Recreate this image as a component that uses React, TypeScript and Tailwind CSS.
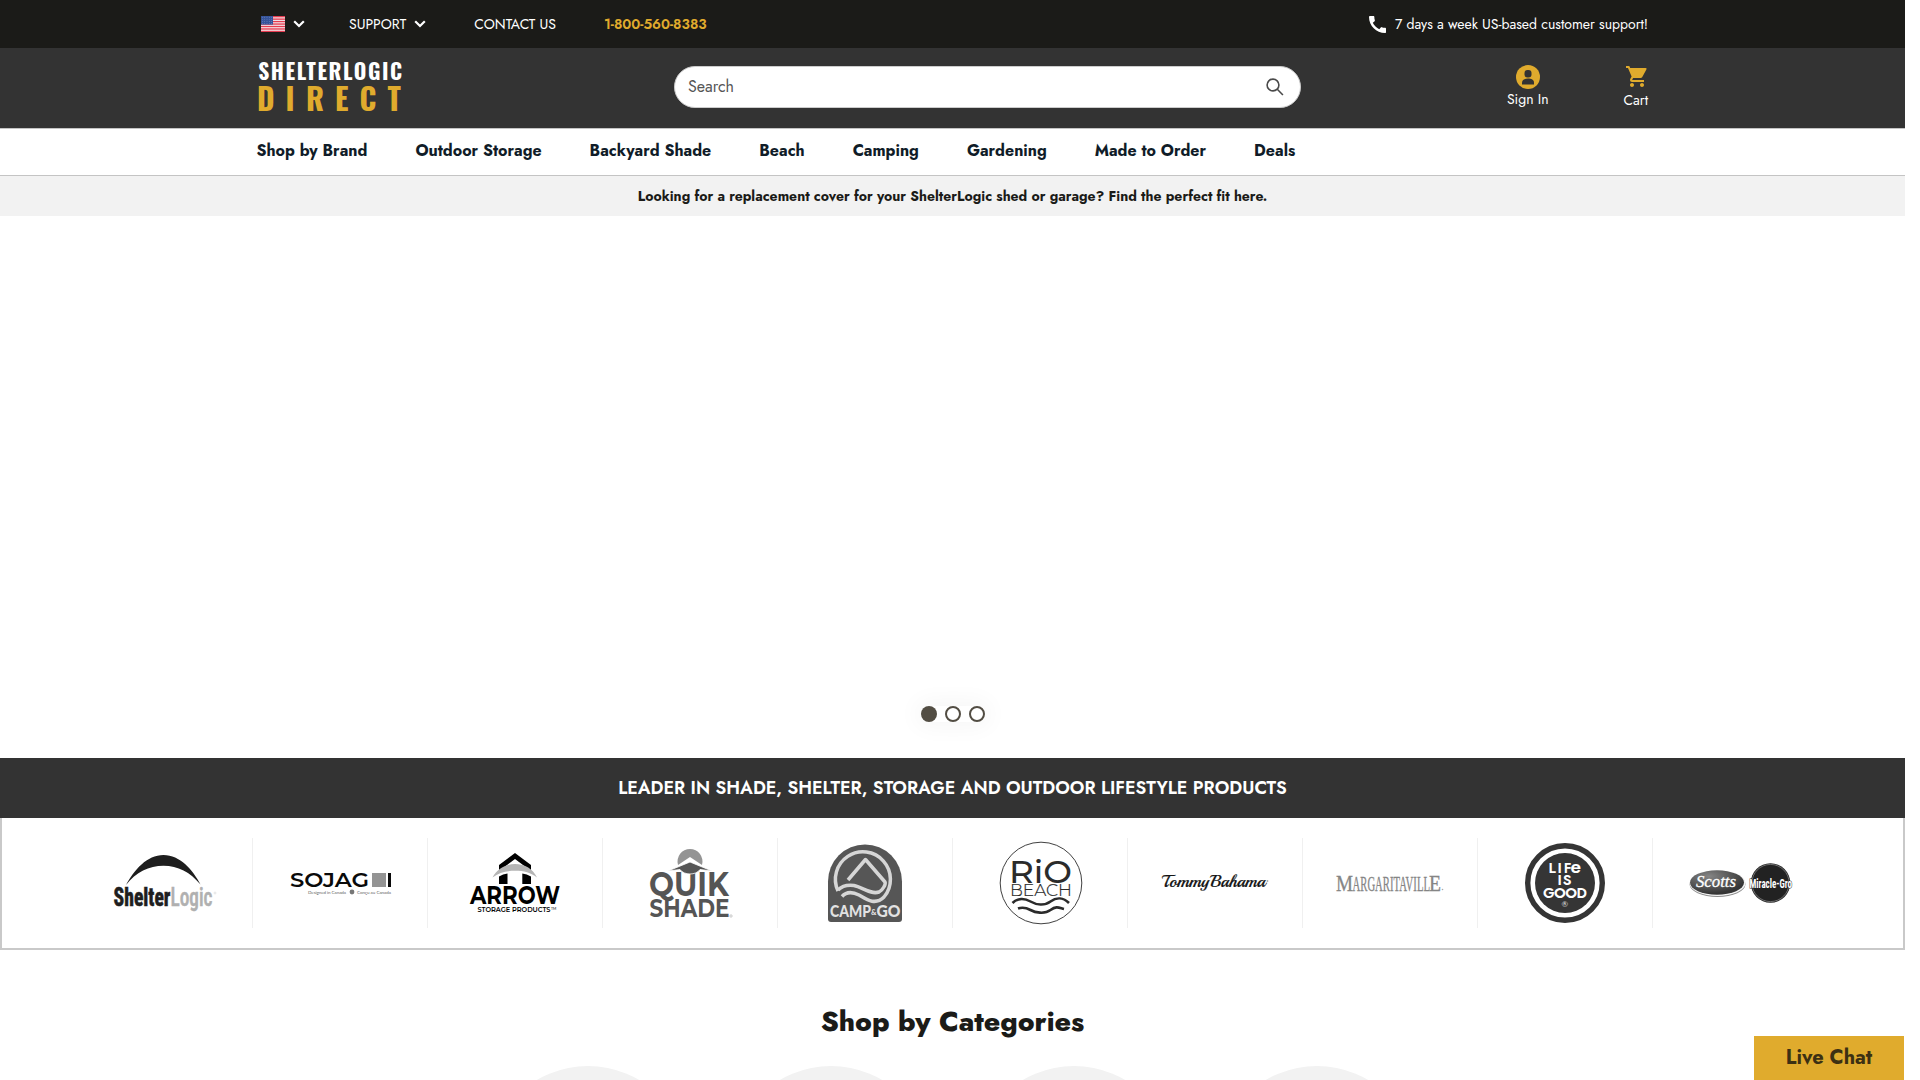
import type { ReactNode } from 'react';

const NAV = ['Shop by Brand', 'Outdoor Storage', 'Backyard Shade', 'Beach', 'Camping', 'Gardening', 'Made to Order', 'Deals'];

function Chevron() {
  return (
    <svg width="12" height="8" viewBox="0 0 12 8" fill="none" stroke="#fff" strokeWidth="2.2">
      <path d="M1.2 1.2 6 6l4.800-4.800" />
    </svg>
  );
}

function Flag() {
  return (
    <svg width="24" height="16" viewBox="0 0 24 16">
      <rect width="24" height="16" fill="#f4eef0" />
      {[0, 1, 2, 3, 4, 5, 6].map((i) => (
        <rect key={i} y={i * 2.46} width="24" height="1.35" fill="#e63c50" />
      ))}
      <rect width="12" height="8.600" fill="#36549a" />
      {[0, 1, 2, 3].map((r) =>
        [0, 1, 2, 3, 4].map((c) => (
          <circle key={`${r}-${c}`} cx={1.4 + c * 2.3} cy={1.2 + r * 2.05} r="0.35" fill="#a9b8dc" />
        )),
      )}
    </svg>
  );
}

function TopBar() {
  return (
    <div className="h-12 bg-[#1b1b18] pr-[257px] pl-[261px] flex items-center justify-between text-[14px] text-white">
      <div className="flex items-center">
        <Flag />
        <span className="ml-2 mr-[44px]"><Chevron /></span>
        <span>SUPPORT</span>
        <span className="ml-2 mr-[48px]"><Chevron /></span>
        <span className="mr-[48px]">CONTACT US</span>
        <span className="font-semibold text-[#e0ab2d]">1-800-560-8383</span>
      </div>
      <div className="flex items-center gap-[9px]">
        <svg width="17" height="17" viewBox="3 3 18 18" fill="#fff">
          <path d="M20.010 15.380c-1.230 0-2.420-.200-3.530-.560a.977.977 0 0 0-1.010.240l-1.570 1.970c-2.830-1.350-5.480-3.900-6.890-6.830l1.950-1.660c.270-.280.350-.670.240-1.020-.370-1.110-.560-2.300-.560-3.530 0-.540-.450-.990-.990-.990H4.190C3.650 3 3 3.240 3 3.990 3 13.280 10.730 21 20.010 21c.710 0 .990-.630.990-1.180v-3.450c0-.540-.450-.990-.990-.990z" />
        </svg>
        <span>7 days a week US-based customer support!</span>
      </div>
    </div>
  );
}

function SiteLogo() {
  return (
    <svg width="148" height="60" viewBox="0 0 148 60" className="overflow-visible font-['Oswald','Roboto_Condensed',sans-serif]">
      <text x="1.200" y="24" fontSize="21.500" fontWeight="700" fill="#fff" textLength="144" lengthAdjust="spacing">SHELTERLOGIC</text>
      <g fontSize="30" fill="#e0ab2d" fontWeight="700">
        <text x="0" y="55">D</text>
        <text x="28.500" y="55">I</text>
        <text x="49" y="55">R</text>
        <text x="78" y="55">E</text>
        <text x="102.500" y="55">C</text>
        <text x="130.500" y="55">T</text>
      </g>
    </svg>
  );
}

function Header() {
  return (
    <div className="h-[81px] border-b border-[#c4c4c4] bg-[#333] pr-[257px] pl-[257px] flex items-start justify-between">
      <div className="mt-2 w-[417px]"><SiteLogo /></div>
      <div className="mt-[18px] h-[42px] w-[627px] rounded-[21px] border border-[#ccc] bg-white pl-[13px] pr-[16px] flex items-center justify-between text-[16px] text-[#555]">
        <span>Search</span>
        <svg width="18" height="18" viewBox="0 0 18 18" fill="none" stroke="#4a4a4a" strokeWidth="1.600">
          <circle cx="7" cy="7" r="5.900" />
          <path d="m11.300 11.300 5.600 5.700" />
        </svg>
      </div>
      <div className="flex grow justify-end text-[14px] text-white">
        <div className="mr-[75px] mt-[17px] flex flex-col items-center">
          <svg width="24" height="24" viewBox="0 0 24 24">
            <circle cx="12" cy="12" r="12" fill="#e0ab2d" />
            <rect x="8.500" y="5" width="7" height="7.500" rx="3" fill="#333" />
            <path d="M6 19.500v-2c0-2.600 2.800-4 6-4s6 1.400 6 4v2z" fill="#333" />
          </svg>
          <span className="leading-[20px]">Sign In</span>
        </div>
        <div className="mt-[17px] flex flex-col items-center">
          <svg width="24" height="24" viewBox="0 0 24 24" fill="#e0ab2d" className="translate-x-px">
            <path d="M7 18c-1.100 0-1.990.900-1.990 2S5.900 22 7 22s2-.900 2-2-.900-2-2-2zM1 1v2h2l3.600 8.590-1.350 2.450c-.160.280-.250.610-.250.960 0 1.100.900 2 2 2h12v-2H7.420c-.140 0-.250-.110-.250-.250l.030-.120.900-1.630h7.450c.750 0 1.410-.410 1.750-1.030l4.080-7.490A1.003 1.003 0 0 0 20.500 3H5.210l-.940-2H1zm16 17c-1.100 0-1.990.900-1.990 2s.890 2 1.990 2 2-.900 2-2-.900-2-2-2z" />
          </svg>
          <span className="mt-px leading-[20px]">Cart</span>
        </div>
      </div>
    </div>
  );
}

function ShelterLogic() {
  return (
    <svg width="104" height="60" viewBox="0 0 104 60" className="overflow-visible">
      <path d="M12 31C20 16 33 1 49.500 1S79 16 86.500 30.500C76 18 64 11.700 49.500 11.700S22 18 12 31z" fill="#1e1e1e" />
      <g className="font-['Roboto_Condensed','Liberation_Sans',sans-serif]" fontSize="25.500">
        <text x="-0.500" y="51.800" fontWeight="800" fill="#1e1e1e" stroke="#1e1e1e" strokeWidth="0.500" textLength="57" lengthAdjust="spacingAndGlyphs">Shelter</text>
        <text x="56.500" y="51.800" fontWeight="500" fill="#b0b0b0" stroke="#b0b0b0" strokeWidth="0.500" textLength="42" lengthAdjust="spacingAndGlyphs">Logic</text>
      </g>
      <circle cx="101" cy="39" r="1" fill="none" stroke="#ccc" strokeWidth="0.500" />
    </svg>
  );
}

function Sojag() {
  return (
    <svg width="102" height="26" viewBox="0 0 102 26" className="overflow-visible">
      <text x="-1" y="16" fontSize="20" className="font-['Montserrat','Lato',sans-serif] font-semibold" fill="#0a0a0a" textLength="79" lengthAdjust="spacingAndGlyphs">SOJAG</text>
      <rect x="81" y="2" width="14" height="14" fill="#949494" />
      <rect x="97" y="2" width="3" height="14" fill="#0a0a0a" />
      <g fontSize="4.500" fill="#666" className="font-['Lato',sans-serif]">
        <text x="17" y="22.500" textLength="38" lengthAdjust="spacing">Designed in Canada</text>
        <text x="66" y="22.500" textLength="34" lengthAdjust="spacing">Conçu au Canada</text>
      </g>
      <circle cx="61" cy="21" r="2.400" fill="#777" />
    </svg>
  );
}

function Arrow() {
  return (
    <svg width="92" height="62" viewBox="0 0 92 62" className="overflow-visible">
      <path d="M29 12 45 0l16 12v7h-4l-2-5.500L45 6l-10 7.500L33 19h-4z" fill="#000" />
      <path d="M22.500 24.500c4.500-8.500 12.500-13.500 22.500-13.500s18 5 22 13.500C61 19.500 54 17.700 45 17.700s-16 1.800-22.500 6.800z" fill="#b5b5b5" />
      <path d="M29 23.500q4-2.300 8.500-3V31H29zM52.300 20.500q4.500.7 8.700 3V31h-8.700z" fill="#000" />
      <text x="0" y="51" fontSize="24.500" className="font-['Montserrat','Lato',sans-serif] font-bold" textLength="90" lengthAdjust="spacingAndGlyphs">ARROW</text>
      <text x="7.500" y="59.200" fontSize="8" className="font-['Montserrat','Lato',sans-serif] font-semibold" textLength="73" lengthAdjust="spacingAndGlyphs">STORAGE PRODUCTS</text>
      <text x="81" y="56.500" fontSize="3.500" className="font-['Lato',sans-serif]">TM</text>
    </svg>
  );
}

function QuikShade() {
  return (
    <svg width="84" height="72" viewBox="0 0 84 72" className="overflow-visible">
      <path d="M28 17a12.500 12.500 0 1 1 24 0l-12-8z" fill="#949494" />
      <g fill="#555" className="font-['Montserrat','Lato',sans-serif]">
        <text x="-1" y="48" fontSize="34" fontWeight="700" textLength="80" lengthAdjust="spacingAndGlyphs">QUIK</text>
        <text x="-0.500" y="69" fontSize="25" fontWeight="700" textLength="80" lengthAdjust="spacingAndGlyphs">SHADE</text>
      </g>
      <path d="m18 23 22-9 22 9-12-1.500c-2 3-6 4.500-10 4.500s-8-1.500-10-4.500z" fill="#555" stroke="#fff" strokeWidth="0.800" />
      <circle cx="81" cy="68" r="1.200" fill="none" stroke="#999" strokeWidth="0.500" />
    </svg>
  );
}

function CampGo() {
  return (
    <svg width="76" height="78" viewBox="0 0 76 78" className="overflow-visible">
      <path d="M0 37.500a37 37 0 0 1 74 0V75q0 3-3 3H3q-3 0-3-3z" fill="#565656" />
      <g fill="none" stroke="#d6d6d6" strokeWidth="3.500" strokeLinejoin="round">
        <path d="M10 47a27.500 27.500 0 1 1 46 6c-9 9-18 2-25-2-7-3.500-13-3-17 1.500" />
        <path d="M20 36 37.500 15.500 57 38c1 2-2 8-6 10-8 3-17-5-25-6.500-7-1-12 .5-16 4.500" />
      </g>
      <g fill="#e2e2e2" className="font-['Lato',sans-serif] font-black">
        <text x="2" y="72.500" fontSize="16" textLength="41" lengthAdjust="spacingAndGlyphs">CAMP</text>
        <text x="43" y="71" fontSize="7.500">&amp;</text>
        <text x="48.500" y="72.500" fontSize="16" textLength="24" lengthAdjust="spacingAndGlyphs">GO</text>
      </g>
    </svg>
  );
}

function RioBeach() {
  return (
    <svg width="84" height="84" viewBox="0 0 84 84" className="overflow-visible">
      <circle cx="42" cy="42" r="40.800" fill="none" stroke="#2b2b2b" strokeWidth="0.900" />
      <g fill="#2b2b2b" className="font-['Montserrat','Lato',sans-serif]">
        <text x="10" y="41.500" fontSize="31" fontWeight="500" textLength="63" lengthAdjust="spacingAndGlyphs">RiO</text>
        <text x="11" y="54.500" fontSize="16" fontWeight="300" stroke="#2b2b2b" strokeWidth="0.200" textLength="62" lengthAdjust="spacingAndGlyphs">BEACH</text>
      </g>
      <g fill="none" stroke="#2b2b2b" strokeWidth="2.600">
        <path d="M13.500 62c5-5 12-5 18-1.500s14 4.500 20 0 13-4 18.500 1.500" />
        <path d="M19 67.500c4-1.500 8-1 12.500 1.500s14 4.500 20 0 9-2 13.500-1" />
      </g>
    </svg>
  );
}

function TommyBahama() {
  return (
    <svg width="110" height="24" viewBox="0 0 110 24" className="overflow-visible">
      <g className="font-['Playball','Lobster_Two','Dancing_Script','Satisfy','Kaushan_Script','Liberation_Serif',cursive]" fontSize="17.500" fontWeight="400" fill="#151515" stroke="#151515" strokeWidth="0.200">
        <text x="2" y="16" textLength="47" lengthAdjust="spacingAndGlyphs">Tommy</text>
        <text x="50.500" y="16" textLength="55" lengthAdjust="spacingAndGlyphs">Bahama</text>
      </g>
      <circle cx="107.500" cy="10" r="0.900" fill="#aaa" />
    </svg>
  );
}

function Margaritaville() {
  return (
    <svg width="110" height="24" viewBox="0 0 110 24" className="overflow-visible">
      <g className="font-['Liberation_Serif',serif]" fill="#858585" stroke="#858585" strokeWidth="0.300">
        <text x="0" y="18.500" fontSize="24" textLength="17" lengthAdjust="spacingAndGlyphs">M</text>
        <text x="16.500" y="18.500" fontSize="20" textLength="77.500" lengthAdjust="spacingAndGlyphs">ARGARITAVILL</text>
        <text x="93" y="18.500" fontSize="24" textLength="12" lengthAdjust="spacingAndGlyphs">E</text>
      </g>
      <circle cx="106.500" cy="17.500" r="0.800" fill="#aaa" />
    </svg>
  );
}

function LifeIsGood() {
  return (
    <svg width="82" height="82" viewBox="0 0 82 82" className="overflow-visible">
      <circle cx="41" cy="41" r="37.300" fill="#fff" stroke="#353535" strokeWidth="5.400" />
      <circle cx="41" cy="41" r="30" fill="#353535" />
      <g fill="#fff" className="font-['Jost','Lato',sans-serif] font-semibold" fontSize="14.500">
        <text x="24.500" y="30.500" textLength="23" lengthAdjust="spacing">LIF</text>
        <text x="46.500" y="30.500" fontSize="19">e</text>
        <text x="33.500" y="43" textLength="14" lengthAdjust="spacing">IS</text>
        <text x="19" y="56" textLength="44" lengthAdjust="spacing">GOOD</text>
      </g>
      <text x="37.500" y="65" fontSize="8" fill="#ddd" className="font-['Lato',sans-serif]">®</text>
    </svg>
  );
}

function Scotts() {
  return (
    <svg width="106" height="42" viewBox="0 0 106 42" className="overflow-visible">
      <defs>
        <radialGradient id="oval" cx="0.350" cy="0.250" r="0.700">
          <stop offset="0" stopColor="#858585" />
          <stop offset="1" stopColor="#363636" />
        </radialGradient>
      </defs>
      <ellipse cx="28.500" cy="22" rx="28" ry="13" fill="#8b8b8b" />
      <ellipse cx="28.500" cy="21" rx="28" ry="13" fill="#f4f4f4" />
      <ellipse cx="28" cy="20.500" rx="27" ry="12.300" fill="url(#oval)" />
      <text x="7" y="25" fontSize="16" fill="#fff" stroke="#fff" strokeWidth="0.300" className="font-['Liberation_Serif',serif] font-normal italic" textLength="40" lengthAdjust="spacingAndGlyphs">Scotts</text>
      <circle cx="81.500" cy="21" r="19.800" fill="#222" />
      <circle cx="81.500" cy="21" r="18.600" fill="none" stroke="#bbb" strokeWidth="0.500" />
      <text x="60.500" y="25.500" fontSize="13.500" fill="#fff" stroke="#222" strokeWidth="1.200" paintOrder="stroke" className="font-['Roboto_Condensed','Liberation_Sans',sans-serif] font-bold" textLength="42.500" lengthAdjust="spacingAndGlyphs">Miracle-Gro</text>
    </svg>
  );
}

/* Each brand mark hangs from the top of its cell; the padding centres the artwork optically. */
const BRANDS: { name: string; pad: string; mark: ReactNode }[] = [
  { name: 'ShelterLogic', pad: 'pt-[16px] pl-[36px]', mark: <ShelterLogic /> },
  { name: 'Sojag', pad: 'pt-[33px] pl-[38px]', mark: <Sojag /> },
  { name: 'Arrow', pad: 'pt-[15px] pl-[42px]', mark: <Arrow /> },
  { name: 'Quik Shade', pad: 'pt-[10px] pl-[47px]', mark: <QuikShade /> },
  { name: 'Camp & Go', pad: 'pt-[6px] pl-[50px]', mark: <CampGo /> },
  { name: 'Rio Beach', pad: 'pt-[3px] pl-[46px]', mark: <RioBeach /> },
  { name: 'Tommy Bahama', pad: 'pt-[33px] pl-[32px]', mark: <TommyBahama /> },
  { name: 'Margaritaville', pad: 'pt-[34px] pl-[33px]', mark: <Margaritaville /> },
  { name: 'Life is Good', pad: 'pt-[4px] pl-[46px]', mark: <LifeIsGood /> },
  { name: 'Scotts Miracle-Gro', pad: 'pt-[24px] pl-[36px]', mark: <Scotts /> },
];

export default function App() {
  return (
    <div className="h-[1080px] w-[1920px] overflow-hidden bg-white font-['Jost','Lato',sans-serif]">
      <div className="w-[1905px]">
        <header>
          <TopBar />
          <Header />
          <nav className="h-[47px] border-b border-[#c4c4c4] pb-[3px] pl-[256.500px] flex items-center gap-12 text-[16px] font-bold text-[#101c28]">
            {NAV.map((n) => <a key={n}>{n}</a>)}
          </nav>
          <p className="h-10 bg-[#f2f2f2] text-center text-[14px] leading-[40px] font-bold text-[#1b1b18]">
            Looking for a replacement cover for your ShelterLogic shed or garage? Find the perfect fit here.
          </p>
        </header>

        <section className="h-[542px] flex items-end justify-center pb-9">
          <div className="flex gap-2 rounded-full shadow-[0_0_22px_6px_rgba(0,0,0,0.035)]">
            <i className="size-4 rounded-full bg-[#524d43]" />
            <i className="size-4 rounded-full border-2 border-[#524d43]" />
            <i className="size-4 rounded-full border-2 border-[#524d43]" />
          </div>
        </section>

        <h2 className="h-[60px] bg-[#333] text-center text-[18px] leading-[60px] font-semibold text-white">
          LEADER IN SHADE, SHELTER, STORAGE AND OUTDOOR LIFESTYLE PRODUCTS
        </h2>
        <section className="h-[132px] border-2 border-t-0 border-[#c9c9c9] pt-5 pl-[76px]">
          <div className="flex">
            {BRANDS.map((b) => (
              <div key={b.name} className="h-[90px] w-[175px] shrink-0 border-r border-[#f0f0f0] last:border-r-0">
                <div className={b.pad}>{b.mark}</div>
              </div>
            ))}
          </div>
        </section>

        <h1 className="mt-[52px] text-center text-[28px] leading-[40px] font-extrabold text-[#1b1b18]">Shop by Categories</h1>
        <div className="mt-6 flex justify-center gap-[41px]">
          <div className="size-[202px] shrink-0 rounded-full bg-[#f2f2f2]" />
          <div className="size-[202px] shrink-0 rounded-full bg-[#f2f2f2]" />
          <div className="size-[202px] shrink-0 rounded-full bg-[#f2f2f2]" />
          <div className="size-[202px] shrink-0 rounded-full bg-[#f2f2f2]" />
        </div>
      </div>
      <button className="fixed top-[1036px] left-[1754px] h-11 w-[150px] bg-[#e0ab2d] text-[20px] leading-[42px] font-bold text-[#3c3013]">
        Live Chat
      </button>
    </div>
  );
}
